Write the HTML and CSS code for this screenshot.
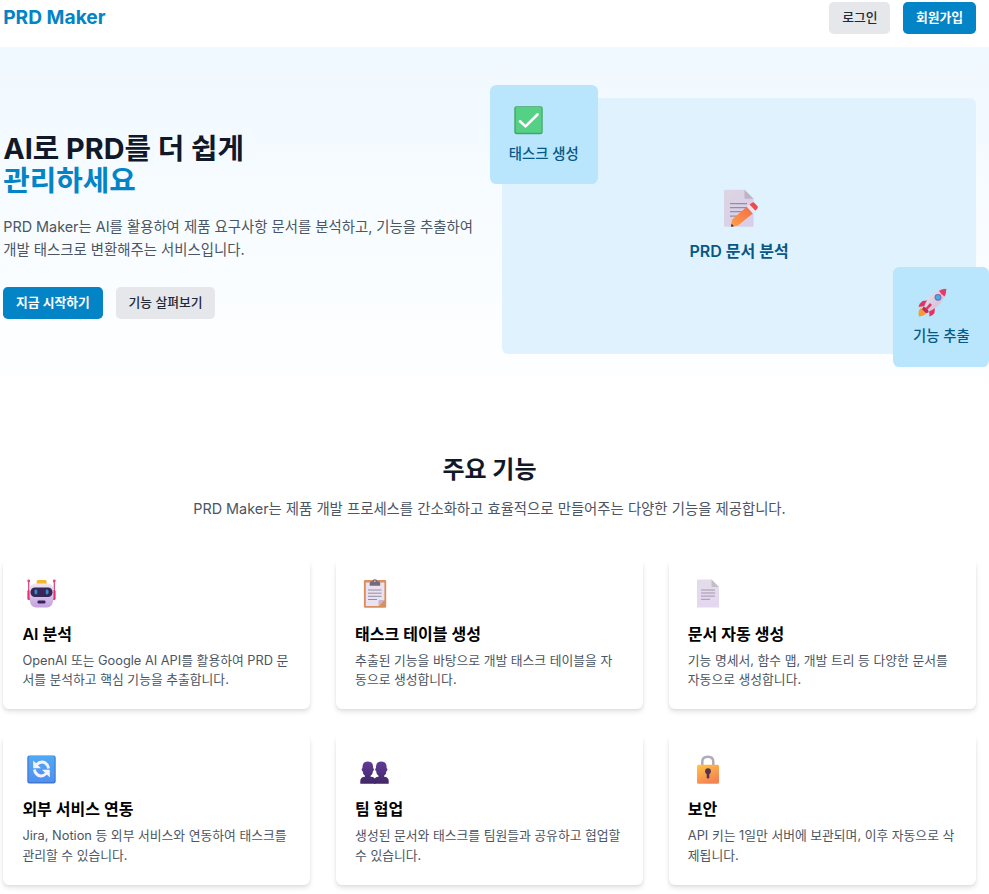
FILE: index.html
```html
<!DOCTYPE html>
<html lang="ko">
<head>
<meta charset="utf-8">
<title>PRD Maker</title>
<link rel="stylesheet" href="styles.css">
</head>
<body>
<header class="header">
  <div class="logo">PRD Maker</div>
  <nav class="actions">
    <button class="btn btn-secondary">로그인</button>
    <button class="btn btn-primary">회원가입</button>
  </nav>
</header>
<section class="hero">
  <div class="hero-copy">
    <h1>AI로 PRD를 더 쉽게<br><span class="accent">관리하세요</span></h1>
    <p class="lead">PRD Maker는 AI를 활용하여 제품 요구사항 문서를 분석하고, 기능을 추출하여 개발 태스크로 변환해주는 서비스입니다.</p>
    <div class="actions">
      <button class="btn btn-primary">지금 시작하기</button>
      <button class="btn btn-secondary">기능 살펴보기</button>
    </div>
  </div>
  <div class="visual">
    <svg class="icon-large" viewBox="0 0 36 38">
      <defs>
        <linearGradient id="paper" x1="0" y1="0" x2="1" y2="1"><stop offset="0" stop-color="#dcd5e2"/><stop offset="1" stop-color="#d8cdeb"/></linearGradient>
        <linearGradient id="pencil" x1="1" y1="0" x2="0" y2="1"><stop offset="0" stop-color="#f4694b"/><stop offset="1" stop-color="#ffa043"/></linearGradient>
      </defs>
      <path d="M2 .5H21.500L30.500 9.500V36.500a1 1 0 0 1-1 1H2a1 1 0 0 1-1-1v-35a1 1 0 0 1 1-1z" fill="url(#paper)"/>
      <path d="M21.500 .5V8.500a1 1 0 0 0 1 1h8z" fill="#bdb4c5"/>
      <path d="M7 14.500H24M7 18.500H24M7 22.500H20M7 27H16" stroke="#988ca5" stroke-width="1.300"/>
      <path d="M9 30.500L24 17.200L30.300 23.800L15 36.300L8 37.500z" fill="url(#pencil)"/>
      <path d="M8.500 34.500L8 37.500L11 37z" fill="#40294d"/>
      <path d="M23.800 17.500L27.300 14.500L33.200 21.200L29.700 24.300z" fill="#eee3f1"/>
      <path d="M26.500 15.300L29.500 13.200Q30.500 12.500 31.500 13.700L34.600 17.100Q35.300 18.100 34.500 19L32.500 21.600z" fill="#ed4c4c"/>
    </svg>
    <div class="visual-title">PRD 문서 분석</div>
    <div class="float float-task">
      <svg class="icon" viewBox="0 0 29 29">
        <rect x=".3" y=".3" width="28.400" height="28" rx="2.200" fill="#43a568"/>
        <rect x="1.700" y="1" width="25.800" height="25.800" rx="1.300" fill="#54d184"/>
        <path d="M6 15.200L11.500 20.400L23.500 8.500" fill="none" stroke="#fff" stroke-width="2.600" stroke-linecap="round" stroke-linejoin="round"/>
      </svg>
      <div>태스크 생성</div>
    </div>
    <div class="float float-feature">
      <svg class="icon" viewBox="0 0 29 29">
        <defs><linearGradient id="rocket" x1="0" y1="0" x2="1" y2="1"><stop offset="0" stop-color="#eee5ef"/><stop offset="1" stop-color="#c9b4d4"/></linearGradient></defs>
        <path d="M2 20.500Q6 19 9 24Q7.500 28 1 28.400Q-.3 24 2 20.500z" fill="#f69b38"/>
        <path d="M10.500 12.300L4.500 13Q1.500 15 .6 19L7.500 18zM17 19L16.500 25Q14.500 28 11.500 28.600L11 21z" fill="#e43263"/>
        <path d="M5.800 19.500C9 10 15 2.500 28.300 .8C27.500 13 19 20.500 9.800 24z" fill="url(#rocket)"/>
        <path d="M21 2.700Q24 1 28.300 .8Q28.500 5 26.700 8.500Q23 6.700 21 2.700z" fill="#e63b62"/>
        <path d="M5.500 18.500Q10 20 10.800 24.300L8.300 25.200L4 21.500z" fill="#c42856"/>
        <path d="M12 15L14 17L9.500 21.500L7.800 20z" fill="#e43263"/>
        <circle cx="20" cy="9.300" r="3.400" fill="#6371a4"/><circle cx="20" cy="9.300" r="2.400" fill="#51a5f1"/>
      </svg>
      <div>기능 추출</div>
    </div>
  </div>
</section>
<section class="features">
  <h2>주요 기능</h2>
  <p class="lead features-lead">PRD Maker는 제품 개발 프로세스를 간소화하고 효율적으로 만들어주는 다양한 기능을 제공합니다.</p>
  <div class="grid">
    <article class="card">
      <svg class="icon" viewBox="0 0 29 29">
        <defs><linearGradient id="robot" x1="0" y1="0" x2="0" y2="1"><stop offset="0" stop-color="#eee6f0"/><stop offset="1" stop-color="#c3a0e0"/></linearGradient></defs>
        <path d="M1.700 2V20M27.300 2V20" stroke="#dd3a70" stroke-width="1.200"/>
        <circle cx="1.700" cy="2" r="1.400" fill="#e64378"/><circle cx="27.300" cy="2" r="1.400" fill="#e64378"/>
        <rect x=".4" y="11" width="4" height="10" rx="1.500" fill="#e52f68"/><rect x="24.600" y="11" width="4" height="10" rx="1.500" fill="#e52f68"/>
        <rect x="9.700" y="1" width="10" height="5" rx="1.500" fill="#f3b72f"/>
        <path d="M9 4.500H20Q26.500 4.500 26.500 11V18Q26.500 28.500 20 28.500H9Q2.500 28.500 2.500 18V11Q2.500 4.500 9 4.500z" fill="url(#robot)"/>
        <rect x="3.500" y="8.500" width="22" height="9.500" rx="4.500" fill="#372659"/>
        <rect x="7.500" y="10.500" width="2.800" height="5" rx="1.400" fill="#318ebe"/><rect x="18.700" y="10.500" width="2.800" height="5" rx="1.400" fill="#318ebe"/>
        <rect x="10.500" y="21.500" width="8" height="3" rx="1.300" fill="#392356"/>
      </svg>
      <h3>AI 분석</h3>
      <p>OpenAI 또는 Google AI API를 활용하여 PRD 문서를 분석하고 핵심 기능을 추출합니다.</p>
    </article>
    <article class="card">
      <svg class="icon" viewBox="0 0 29 29">
        <rect x="3.900" y="1" width="22.300" height="27.700" rx="1.200" fill="#da8f5f"/>
        <path d="M5.800 3.500H24.400V21L18.500 27H5.800z" fill="#eae1f1"/>
        <path d="M24.400 21H19.700Q18.500 21 18.500 22V27z" fill="#c5b5cf"/>
        <path d="M8 11H21.500M8 14.200H21.500M8 17.300H21.500M8 20.500H17" stroke="#8c8398" stroke-width=".9"/>
        <path d="M9.700 6.700V4Q9.700 2.300 12.200 2.300Q12.700 .3 14.900 .3T17.700 2.300Q20.200 2.300 20.200 4V6.700z" fill="#756b7c"/><circle cx="14.900" cy="2.300" r=".8" fill="#ddd"/>
      </svg>
      <h3>태스크 테이블 생성</h3>
      <p>추출된 기능을 바탕으로 개발 태스크 테이블을 자동으로 생성합니다.</p>
    </article>
    <article class="card">
      <svg class="icon" viewBox="0 0 29 29">
        <defs><linearGradient id="document" x1="0" y1="0" x2="0" y2="1"><stop offset="0" stop-color="#e3dce8"/><stop offset="1" stop-color="#e4d7f1"/></linearGradient></defs>
        <path d="M4.500 .5H18.500L26 8V28Q26 28.600 25.400 28.600H4.500Q4 28.600 4 28V1Q4 .5 4.500 .5z" fill="url(#document)"/>
        <path d="M18.500 .5V7Q18.500 8 19.500 8H26z" fill="#c5bdca"/>
        <path d="M8 11H22M8 14H22M8 17.100H22M8 20.300H17" stroke="#a295ad" stroke-width="1"/>
      </svg>
      <h3>문서 자동 생성</h3>
      <p>기능 명세서, 함수 맵, 개발 트리 등 다양한 문서를 자동으로 생성합니다.</p>
    </article>
    <article class="card">
      <svg class="icon" viewBox="0 0 29 29">
        <defs><linearGradient id="sync" x1="0" y1="0" x2="0" y2="1"><stop offset="0" stop-color="#4fa9f5"/><stop offset="1" stop-color="#5190ef"/></linearGradient></defs>
        <rect x=".3" y=".5" width="28.400" height="28" rx="2.200" fill="#4077ce"/>
        <rect x="1.500" y="1" width="26" height="26" rx="1.500" fill="url(#sync)"/>
        <path d="M9 10Q15.500 4 20.300 10Q21.300 11.500 21.500 13.500M20 18Q13.500 24 8.700 18Q7.700 16.500 7.500 14.500" fill="none" stroke="#f5f1ff" stroke-width="2.900"/>
        <path d="M6.200 5.500V13.300H14zM22.800 22.500V14.700H15z" fill="#f5f1ff"/>
      </svg>
      <h3>외부 서비스 연동</h3>
      <p>Jira, Notion 등 외부 서비스와 연동하여 태스크를 관리할 수 있습니다.</p>
    </article>
    <article class="card">
      <svg class="icon" viewBox="0 0 29 29">
        <defs><linearGradient id="people" x1="0" y1="0" x2="0" y2="1"><stop offset="0" stop-color="#613c99"/><stop offset="1" stop-color="#412765"/></linearGradient></defs>
        <g fill="url(#people)">
          <path d="M2.500 11.500Q2.500 6.500 7.800 6.500T13.100 11.500V13.200Q14.100 13.300 13.900 14.700Q13.700 16 13 16Q12.800 19.500 10.600 20.800V21.800H11Q15.500 22 15.500 26V28.700H.3V26Q.3 22 5 21.800V20.800Q2.800 19.500 2.600 16Q1.900 16 1.700 14.700Q1.500 13.300 2.500 13.200z"/>
          <path d="M16 11.500Q16 6.500 21.300 6.500T26.600 11.500V13.200Q27.600 13.300 27.400 14.700Q27.200 16 26.500 16Q26.300 19.500 24.100 20.800V21.800Q28.700 22 28.700 26V28.700H14V26Q14 22 18.500 21.800V20.800Q16.300 19.500 16.100 16Q15.400 16 15.200 14.700Q15 13.300 16 13.200z"/>
        </g>
      </svg>
      <h3>팀 협업</h3>
      <p>생성된 문서와 태스크를 팀원들과 공유하고 협업할 수 있습니다.</p>
    </article>
    <article class="card">
      <svg class="icon" viewBox="0 0 29 29">
        <defs><linearGradient id="lock" x1="0" y1="0" x2=".5" y2="1"><stop offset="0" stop-color="#ffc545"/><stop offset="1" stop-color="#f48452"/></linearGradient></defs>
        <path d="M9.300 10.500V6.700Q9.300 1.700 14.800 1.700T20.300 6.700V10.500" fill="none" stroke="#b2a9bb" stroke-width="2.500"/>
        <rect x="4" y="9.700" width="22" height="19" rx="1.500" fill="url(#lock)"/>
        <circle cx="15" cy="16.200" r="2.900" fill="#503452"/><path d="M15 16V22.300" stroke="#503452" stroke-width="2.600" stroke-linecap="round"/>
      </svg>
      <h3>보안</h3>
      <p>API 키는 1일만 서버에 보관되며, 이후 자동으로 삭제됩니다.</p>
    </article>
  </div>
</section>
</body>
</html>
```
FILE: styles.css
```css
* { box-sizing: border-box; }

body {
  margin: 0;
  overflow-x: hidden;
  background: #fff;
  color: #000;
  font-family: Inter, "Noto Sans CJK KR", sans-serif;
  font-size: 12.8px;
  line-height: 19.2px;
}

h1, h2, h3, p { margin: 0; }

.header {
  display: flex;
  justify-content: space-between;
  align-items: center;
  padding: 2px 13.2px 12.8px 3.2px;
}

.logo {
  color: #0284c7;
  font-size: 19.2px;
  line-height: 25.6px;
  font-weight: 700;
}

.actions { display: flex; gap: 12.8px; }
.hero-copy .actions { gap: 13.1px; }

.btn {
  height: 32px;
  padding: 0 12.8px;
  border: 0;
  border-radius: 4.8px;
  font: 500 12.8px/19.2px Inter, "Noto Sans CJK KR", sans-serif;
  white-space: nowrap;
}

.btn-primary { background: #0284c7; color: #fff; font-weight: 600; }
.btn-secondary { background: #e5e7eb; color: #1f2937; }

.hero {
  display: grid;
  grid-template-columns: 1fr 1fr;
  gap: 25.6px;
  align-items: center;
  padding: 51.2px 13.2px 51.2px 3.2px;
  background: linear-gradient(#f0f9ff, #fff);
}

h1 {
  margin-bottom: 19.2px;
  color: #111827;
  font-size: 28.8px;
  line-height: 32px;
  font-weight: 700;
}

.accent { color: #0284c7; }

.lead {
  color: #4b5563;
  font-size: 14.4px;
  line-height: 22.4px;
}

.hero-copy .lead { margin-bottom: 25.6px; }

.visual {
  position: relative;
  display: flex;
  flex-direction: column;
  align-items: center;
  justify-content: center;
  height: 256px;
  border-radius: 6.4px;
  background: #e0f2fe;
  color: #075985;
}

.icon-large { width: 36px; height: 38.4px; margin: 0 0 12.8px 3px; }
.visual-title { font-size: 16px; line-height: 22.4px; font-weight: 600; }

.float {
  position: absolute;
  padding: 19.2px;
  border-radius: 6.4px;
  background: #bae6fd;
  font-size: 14.4px;
  line-height: 22.4px;
  font-weight: 500;
  white-space: nowrap;
}

.float-task { top: -12.8px; left: -12.8px; }
.float-feature { right: -13.2px; bottom: -12.8px; padding-top: 19.8px; padding-left: 19.8px; }

.icon {
  display: block;
  width: 29px;
  height: 29px;
  margin: 1.4px 0 14.4px 5px;
}

.float .icon { margin-bottom: 8px; }

.features { padding: 51.2px 13.2px 8px 3.2px; }

h2 {
  margin-bottom: 12.8px;
  color: #111827;
  font-size: 24px;
  line-height: 28.8px;
  font-weight: 700;
  text-align: center;
}

.features-lead { margin-bottom: 38.4px; text-align: center; }

.grid {
  display: grid;
  grid-template-columns: repeat(3, 1fr);
  gap: 25.3px 25.6px;
}

.card {
  padding: 19.2px 19.6px 19.9px 19.2px;
  border-radius: 6.4px;
  background: #fff;
  box-shadow: 0 3.2px 4.8px -0.8px rgba(0, 0, 0, 0.1), 0 1.6px 3.2px -1.6px rgba(0, 0, 0, 0.1);
}

h3 {
  margin-bottom: 5.7px;
  font-size: 16px;
  line-height: 22.4px;
  font-weight: 600;
}

.card p { color: #4b5563; }
```
